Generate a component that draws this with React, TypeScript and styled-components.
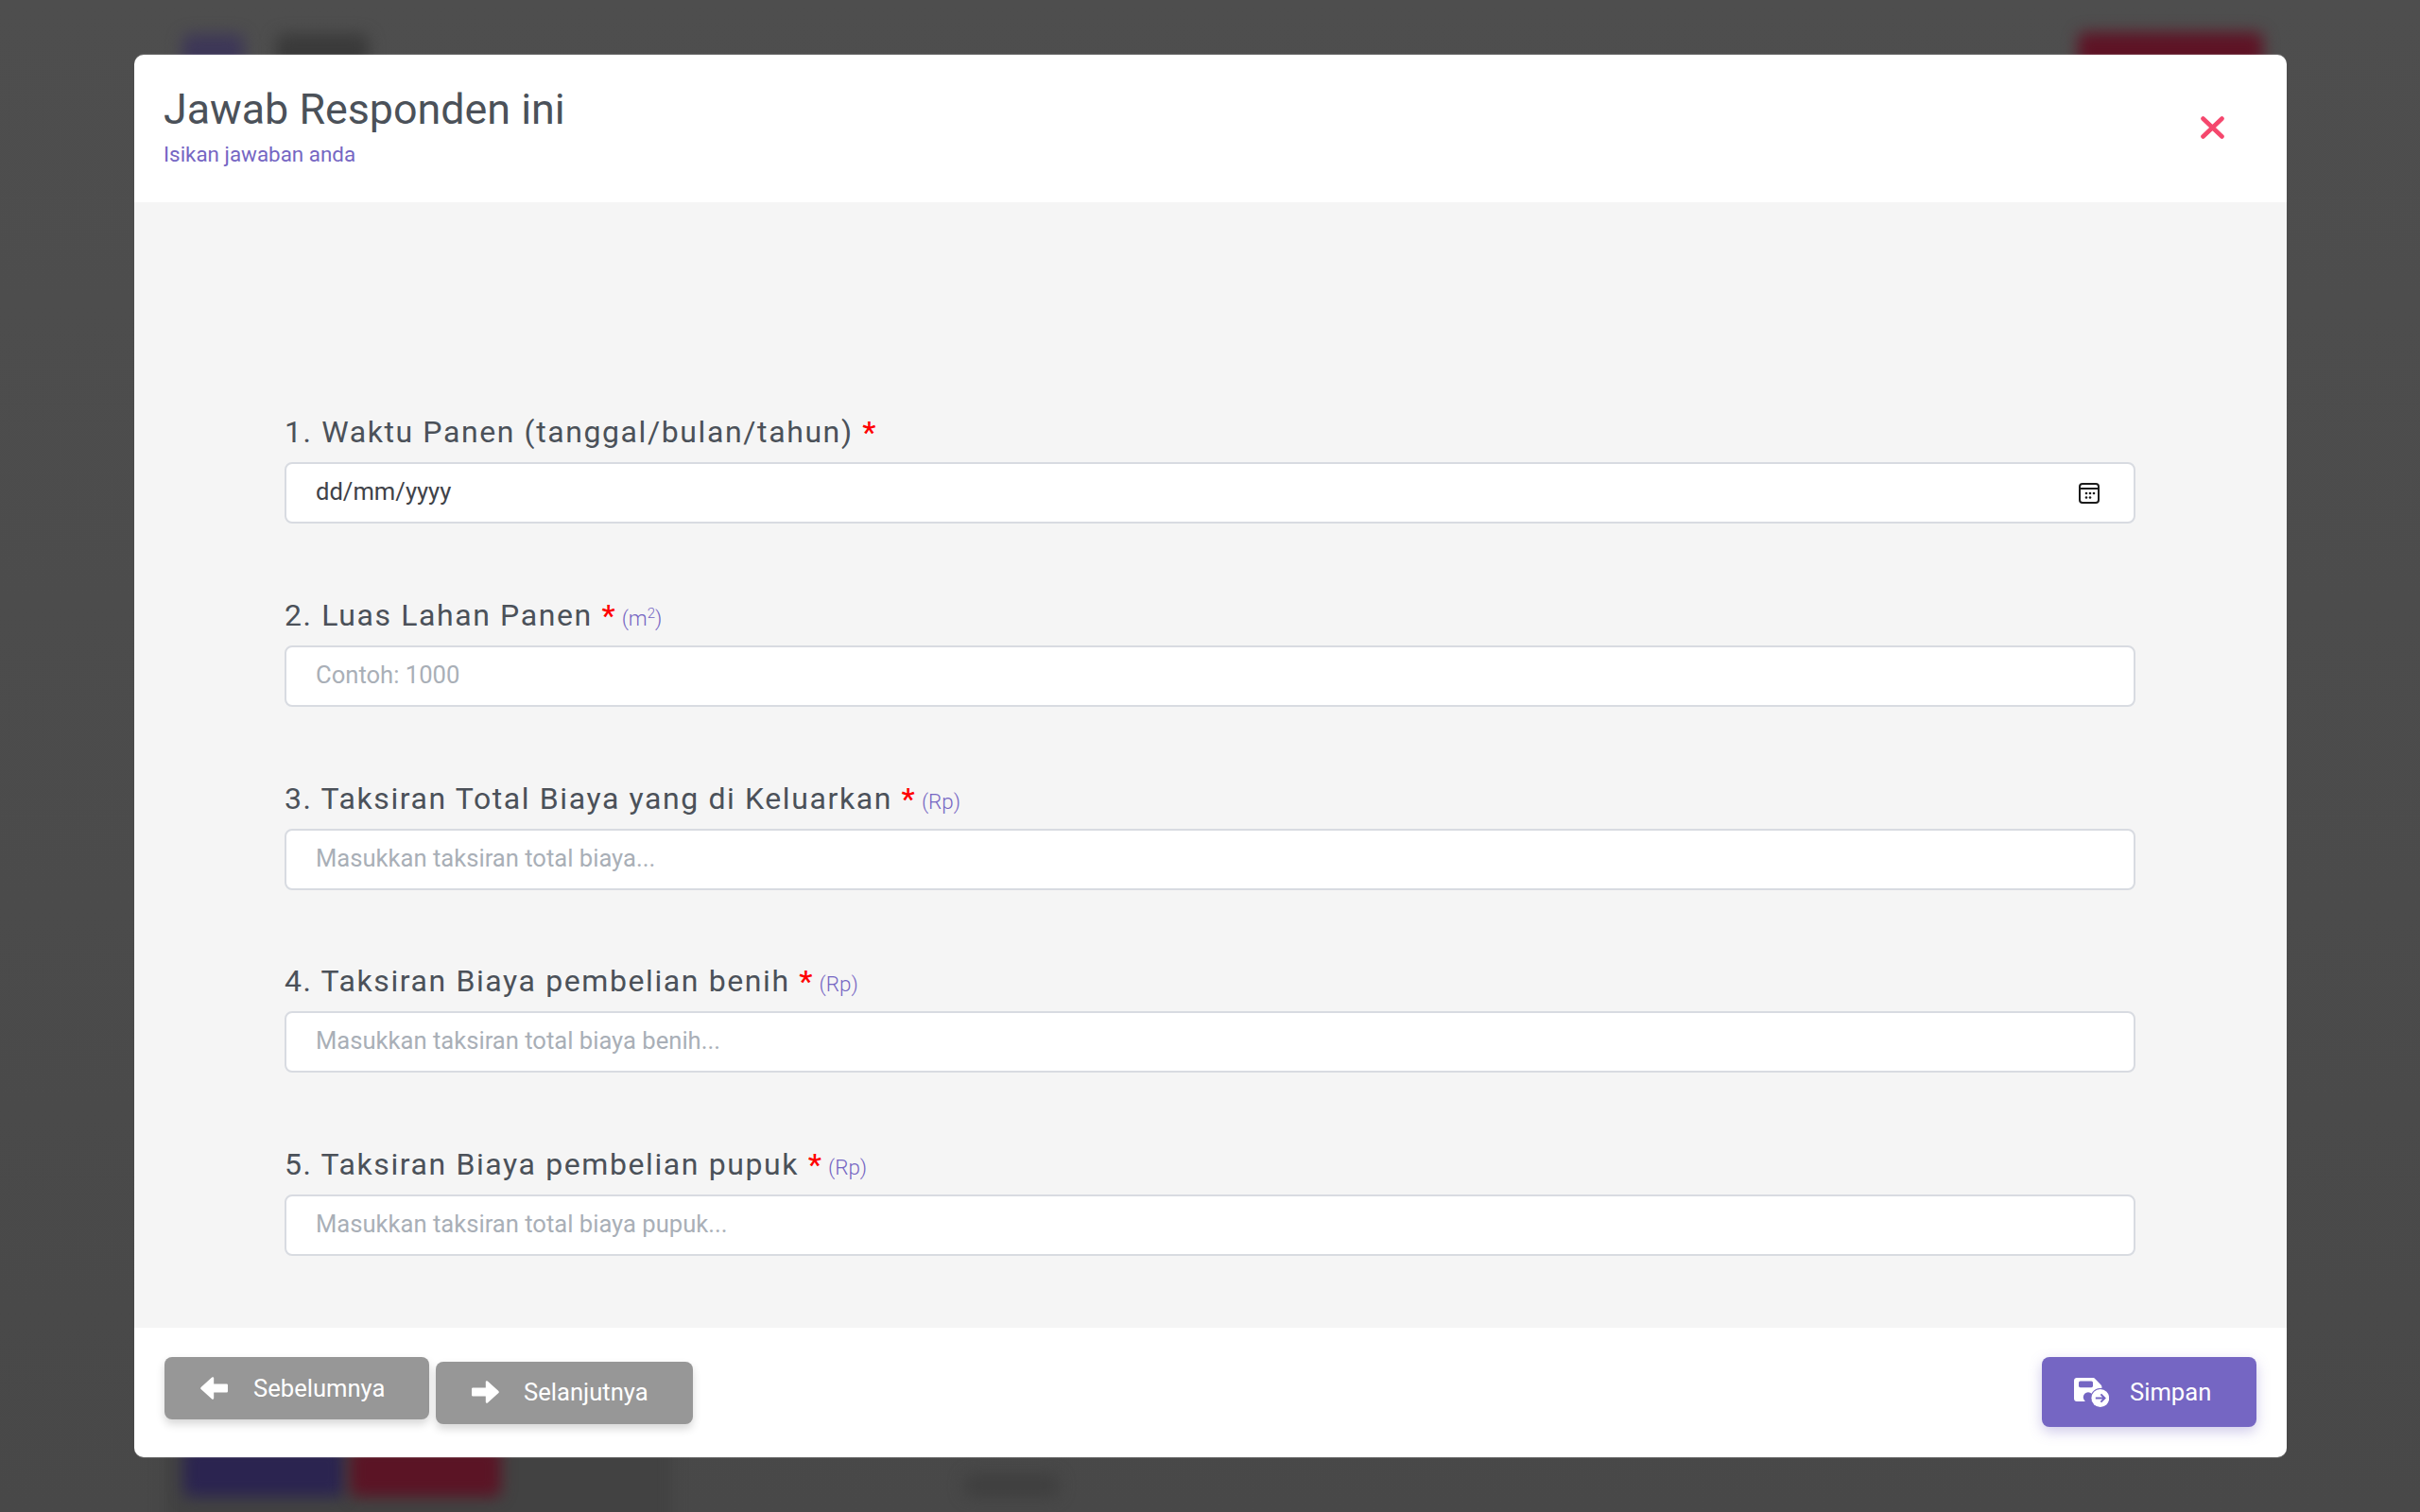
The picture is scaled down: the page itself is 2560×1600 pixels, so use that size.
import React from "react";
import styled, { createGlobalStyle } from "styled-components";

const Global = createGlobalStyle`
  html, body { margin: 0; padding: 0; background: #4b4b4b; }
  body { font-family: Roboto, "Liberation Sans", sans-serif; }
  * { box-sizing: border-box; }
`;

const Page = styled.div`
  position: relative;
  width: 2560px;
  height: 1600px;
  overflow: hidden;
  padding: 58px 141px 58px 142px;
  background: linear-gradient(180deg, #4e4e4e 0%, #4b4b4b 60%, #484848 100%);
`;

const Ghost = styled.div<{ $x: number; $y: number; $w: number; $h: number; $c: string }>`
  position: absolute;
  left: ${(p) => p.$x}px;
  top: ${(p) => p.$y}px;
  width: ${(p) => p.$w}px;
  height: ${(p) => p.$h}px;
  background: ${(p) => p.$c};
  border-radius: 8px;
  filter: blur(8px);
`;

const Modal = styled.div`
  position: relative;
  display: flex;
  flex-direction: column;
  height: 1484px;
  background: #fff;
  border-radius: 10px;
  overflow: hidden;
  box-shadow: 0 -1px 0 rgba(255, 255, 255, 0.2), 0 1px 0 rgba(255, 255, 255, 0.2);
`;

const Header = styled.header`
  display: flex;
  justify-content: space-between;
  align-items: flex-start;
  height: 156px;
  padding: 30px 66px 0 31px;
`;

const Title = styled.h2`
  margin: 0;
  font-size: 44.8px;
  line-height: 56px;
  font-weight: 400;
  color: #4b5159;
`;

const Subtitle = styled.div`
  margin-top: 4px;
  font-size: 22.4px;
  line-height: 30px;
  color: #7566c3;
`;

const Close = styled.button`
  display: flex;
  margin: 35px 0 0;
  padding: 0;
  border: 0;
  background: none;
  color: #f5476d;
`;

const Body = styled.main`
  flex: 1;
  display: flex;
  flex-direction: column;
  gap: 77.8px;
  background: #f5f5f5;
  padding: 224px 160px 0 159px;
`;

const Question = styled.section`
  display: flex;
  flex-direction: column;
  gap: 13px;
`;

const Label = styled.label`
  display: block;
  height: 38px;
  font-size: 32px;
  line-height: 38px;
  letter-spacing: 1.6px;
  color: #4b5159;
  white-space: nowrap;
`;

const Star = styled.span`
  color: #ff0000;
  font-weight: 500;
`;

const Unit = styled.span`
  margin-left: -4px;
  font-size: 22.4px;
  font-weight: 300;
  letter-spacing: 0;
  color: #7566c3;
  sup { font-size: 15px; line-height: 0; }
`;

const Field = styled.div`
  display: flex;
  align-items: center;
  height: 65px;
  padding: 0 32px 0 31px;
  background: #fff;
  border: 2px solid #d8dbe1;
  border-radius: 8px;
`;

const Input = styled.input`
  flex: 1;
  min-width: 0;
  padding: 0 0 3px;
  border: 0;
  outline: 0;
  background: none;
  font: 400 25.6px Roboto, "Liberation Sans", sans-serif;
  color: #3f4349;
  &::placeholder { color: #a9afb7; opacity: 1; }
`;

const CalIcon = styled.svg`
  margin-right: 3px;
  flex: none;
`;

const Footer = styled.footer`
  display: flex;
  justify-content: space-between;
  align-items: flex-start;
  height: 137px;
  padding: 31px 32px 0;
`;

const NavGroup = styled.div`
  display: flex;
  align-items: flex-start;
  gap: 7px;
`;

const Btn = styled.button<{ $w: number; $h: number; $top?: number; $pad: number; $gap: number; $lift?: number; $primary?: boolean }>`
  display: flex;
  align-items: center;
  gap: ${(p) => p.$gap}px;
  width: ${(p) => p.$w}px;
  height: ${(p) => p.$h}px;
  margin-top: ${(p) => p.$top ?? 0}px;
  padding: 0 0 ${(p) => p.$lift ?? 0}px ${(p) => p.$pad}px;
  border: 0;
  border-radius: 8px;
  font: 400 25.6px Roboto, "Liberation Sans", sans-serif;
  color: #fff;
  background: ${(p) => (p.$primary ? "#7566c3" : "#979797")};
  box-shadow: ${(p) =>
    p.$primary
      ? "0 5px 14px rgba(117, 102, 195, 0.35)"
      : "0 5px 10px rgba(0, 0, 0, 0.16)"};
`;

const ArrowLeft = () => (
  <svg width="29" height="24" viewBox="0 0 29 24">
    <path
      fill="#fff"
      stroke="#fff"
      strokeWidth="2.4"
      strokeLinejoin="round"
      d="M1.4 12 13 1.4v7.4h14.8v6.4H13v7.4Z"
    />
  </svg>
);

const ArrowRight = () => (
  <svg width="29" height="24" viewBox="0 0 29 24">
    <path
      fill="#fff"
      stroke="#fff"
      strokeWidth="2.4"
      strokeLinejoin="round"
      d="M27.6 12 16 1.4v7.4H1.2v6.4H16v7.4Z"
    />
  </svg>
);

const SaveIcon = () => (
  <svg width="37" height="31" viewBox="0 0 37 31">
    <path
      fill="#fff"
      d="M3 0h17c1 0 1.6.3 2.2 1l6.3 6.4c.6.6.9 1.3.9 2.2v1.5A10 10 0 0 0 18.5 25H3c-1.7 0-3-1.3-3-3V3c0-1.7 1.3-3 3-3Z"
    />
    <rect x="5" y="3.6" width="15" height="6.6" rx="1.6" fill="#7566c3" />
    <circle cx="15" cy="20.5" r="5.2" fill="#7566c3" />
    <circle cx="27.8" cy="21.5" r="9.4" fill="#fff" />
    <path
      d="M22.8 21.5h9.4M28.4 17.4l4.1 4.1-4.1 4.1"
      fill="none"
      stroke="#7566c3"
      strokeWidth="2"
    />
  </svg>
);

const questions = [
  { n: "2. Luas Lahan Panen", unit: <>(m<sup>2</sup>)</>, ph: "Contoh: 1000" },
  { n: "3. Taksiran Total Biaya yang di Keluarkan", unit: "(Rp)", ph: "Masukkan taksiran total biaya..." },
  { n: "4. Taksiran Biaya pembelian benih", unit: "(Rp)", ph: "Masukkan taksiran total biaya benih..." },
  { n: "5. Taksiran Biaya pembelian pupuk", unit: "(Rp)", ph: "Masukkan taksiran total biaya pupuk..." },
];

export default function App() {
  return (
    <Page>
      <Global />
      <Ghost $x={193} $y={36} $w={65} $h={40} $c="#3d3757" />
      <Ghost $x={292} $y={36} $w={98} $h={40} $c="#3a3a3a" />
      <Ghost $x={2198} $y={34} $w={196} $h={40} $c="#5e1325" />
      <Ghost $x={175} $y={1500} $w={535} $h={120} $c="#424242" />
      <Ghost $x={194} $y={1530} $w={170} $h={54} $c="#2b2450" />
      <Ghost $x={370} $y={1530} $w={160} $h={54} $c="#5b1425" />
      <Ghost $x={1020} $y={1560} $w={100} $h={24} $c="#3f3f3f" />
      <Modal>
        <Header>
          <div>
            <Title>Jawab Responden ini</Title>
            <Subtitle>Isikan jawaban anda</Subtitle>
          </div>
          <Close aria-label="Tutup">
            <svg width="25" height="24" viewBox="0 0 25 24" fill="none">
              <path d="M2.5 2.5l20 19M22.5 2.5l-20 19" stroke="currentColor" strokeWidth="4.6" strokeLinecap="round" />
            </svg>
          </Close>
        </Header>
        <Body>
          <Question>
            <Label>
              1. Waktu Panen (tanggal/bulan/tahun) <Star>*</Star>
            </Label>
            <Field>
              <Input defaultValue="dd/mm/yyyy" />
              <CalIcon width="24" height="24" viewBox="0 0 24 24" fill="none">
                <rect x="2" y="2" width="20" height="20" rx="3" stroke="#1b1b1b" strokeWidth="2" />
                <path d="M2 7h20" stroke="#1b1b1b" strokeWidth="2" />
                <g fill="#1b1b1b">
                  <circle cx="9" cy="12" r="1.3" />
                  <circle cx="13" cy="12" r="1.3" />
                  <circle cx="17" cy="12" r="1.3" />
                  <circle cx="9" cy="16.5" r="1.3" />
                  <circle cx="13" cy="16.5" r="1.3" />
                </g>
              </CalIcon>
            </Field>
          </Question>
          {questions.map((q) => (
            <Question key={q.n}>
              <Label>
                {q.n} <Star>*</Star> <Unit>{q.unit}</Unit>
              </Label>
              <Field>
                <Input placeholder={q.ph} />
              </Field>
            </Question>
          ))}
        </Body>
        <Footer>
          <NavGroup>
            <Btn $w={280} $h={66} $pad={38} $gap={27}>
              <ArrowLeft />
              Sebelumnya
            </Btn>
            <Btn $w={272} $h={66} $top={5} $pad={38} $gap={26} $lift={2}>
              <ArrowRight />
              Selanjutnya
            </Btn>
          </NavGroup>
          <Btn $w={227} $h={74} $pad={34} $gap={22} $primary>
            <SaveIcon />
            Simpan
          </Btn>
        </Footer>
      </Modal>
    </Page>
  );
}
